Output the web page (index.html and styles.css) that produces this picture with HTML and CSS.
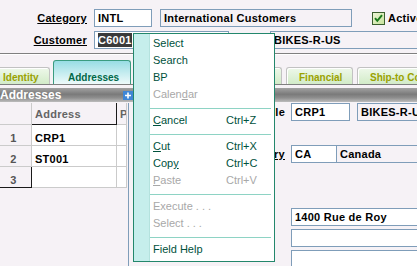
FILE: index.html
```html
<!DOCTYPE html>
<html>
<head>
<meta charset="utf-8">
<title>Customer Maintenance</title>
<link rel="stylesheet" href="styles.css">
</head>
<body>
<div class="page">
  <div class="hdr">
    <div class="frow">
      <span class="lbl">Category</span>
      <div class="inp w-cat">INTL</div>
      <div class="inp ro w-catd">International Customers</div>
      <div class="chk">
        <svg width="13" height="13" viewBox="0 0 13 13" class="chkbox">
          <defs>
            <linearGradient id="cg" x1="0" y1="0" x2="1" y2="1">
              <stop offset="0" stop-color="#eef6d8"/>
              <stop offset="1" stop-color="#c6e29a"/>
            </linearGradient>
          </defs>
          <rect x="0.5" y="0.5" width="12" height="12" fill="url(#cg)" stroke="#3b5f2e"/>
          <path d="M3 6.2 L5.3 8.8 L10 3.2" fill="none" stroke="#1b7a1b" stroke-width="2"/>
        </svg>
        <span>Active</span>
      </div>
    </div>
    <div class="frow r2">
      <span class="lbl">Customer</span>
      <div class="inp w-cus"><span class="sel">C6001</span></div>
      <div class="inp ro w-cusd">BIKES-R-US</div>
    </div>
  </div>
  <div class="rule"></div>
  <div class="tabs">
    <div class="tab w-ident">Identity</div>
    <div class="tab active w-addr">Addresses</div>
    <div class="tab w-cont">Contacts</div>
    <div class="tab w-mkt">Marketing</div>
    <div class="tab w-fin">Financial</div>
    <div class="tab w-ship">Ship-to Codes</div>
  </div>
  <div class="bar">
    <div class="bar-left"><span>Addresses</span><span class="plus"><svg width="10" height="9" viewBox="0 0 10 9"><rect width="10" height="9" fill="#3f86d6"/><path d="M5 1.5V7.5M2 4.5H8" stroke="#fff" stroke-width="1.6"/></svg></span></div>
  </div>
  <div class="main">
    <div class="leftp">
      <div class="grid">
        <div class="gc gh"></div>
        <div class="gc gh gfocus">Address</div>
        <div class="gc gh">P</div>
        <div class="gc gn">1</div>
        <div class="gc">CRP1</div>
        <div class="gc"></div>
        <div class="gc gn">2</div>
        <div class="gc">ST001</div>
        <div class="gc"></div>
        <div class="gc gn gcur">3</div>
        <div class="gc"></div>
        <div class="gc"></div>
      </div>
    </div>
    <div class="rightp">
      <div class="rrow">
        <span class="rlbl">Address Handle</span>
        <div class="inp w-code">CRP1</div>
        <div class="inp ro w-name">BIKES-R-US</div>
      </div>
      <div class="rrow r-country">
        <span class="rlbl ul">Country</span>
        <div class="inp w-cc">CA</div>
        <div class="inp ro w-cn">Canada</div>
      </div>
      <div class="rrow r-addr">
        <span class="rlbl"></span>
        <div class="inp w-line">1400 Rue de Roy</div>
      </div>
      <div class="rrow r-next">
        <span class="rlbl"></span>
        <div class="inp w-line"></div>
      </div>
      <div class="rrow r-next">
        <span class="rlbl"></span>
        <div class="inp w-line"></div>
      </div>
    </div>
  </div>
</div>

<div class="menu">
  <div class="mi"><span>Select</span><span></span></div>
  <div class="mi"><span>Search</span><span></span></div>
  <div class="mi"><span>BP</span><span></span></div>
  <div class="mi dis"><span>Calen<u>d</u>ar</span><span></span></div>
  <div class="sep"></div>
  <div class="mi"><span><u>C</u>ancel</span><span>Ctrl+Z</span></div>
  <div class="sep"></div>
  <div class="mi"><span><u>C</u>ut</span><span>Ctrl+X</span></div>
  <div class="mi"><span>Cop<u>y</u></span><span>Ctrl+C</span></div>
  <div class="mi dis"><span><u>P</u>aste</span><span>Ctrl+V</span></div>
  <div class="sep"></div>
  <div class="mi dis"><span>Execute . . .</span><span></span></div>
  <div class="mi dis"><span>Select . . .</span><span></span></div>
  <div class="sep"></div>
  <div class="mi"><span>Field Help</span><span></span></div>
</div>
</body>
</html>
```

FILE: styles.css
```css
* { box-sizing: border-box; }
html, body { margin: 0; padding: 0; }
body {
  width: 417px;
  height: 266px;
  overflow: hidden;
  position: relative;
  background: #f6f2f6;
  color: #000;
  font-family: "Liberation Sans", Arial, sans-serif;
  font-size: 11px;
}
.page { width: 417px; height: 266px; overflow: hidden; }

/* header fields */
.hdr { padding-top: 9px; }
.frow { display: flex; align-items: center; height: 18px; white-space: nowrap; }
.r2 { margin-top: 4px; }
.lbl {
  flex: none;
  width: 87px;
  margin-right: 7px;
  text-align: right;
  font-weight: bold;
  letter-spacing: .25px;
  text-decoration: underline;
}
.inp {
  flex: none;
  height: 18px;
  border: 1px solid #7f9db9;
  background: #fff;
  padding: 0 3px;
  font-weight: bold;
  letter-spacing: .25px;
  display: flex;
  align-items: center;
  overflow: hidden;
  white-space: nowrap;
}
.ro { background: #f6f2f6; }
.w-cat { width: 58px; margin-right: 8px; }
.w-catd { width: 192px; margin-right: 20px; }
.w-cus { width: 135px; margin-right: 41px; }
.w-cusd { width: 170px; }
.sel { background: #3a3a3a; color: #fff; line-height: 14px; }
.chk { display: flex; align-items: center; font-weight: bold; letter-spacing: .25px; }
.chkbox { margin-right: 3px; flex: none; }

.rule { margin-top: 4px; height: 2px; border-top: 1px solid #808080; border-bottom: 1px solid #fff; }

/* tabs */
.tabs {
  display: flex;
  align-items: flex-end;
  gap: 4px;
  height: 30px;
  margin-left: -10px;
  border-bottom: 1px solid #808080;
}
.tab {
  flex: none;
  height: 17px;
  padding: 4px 0 0 12px;
  line-height: 12px;
  border: 1px solid #c2c2c2;
  border-bottom: none;
  border-radius: 3px 3px 0 0;
  background: linear-gradient(#eef8ea, #d2ebc8);
  box-shadow: inset 1px 1px 0 #fff;
  color: #9aa200;
  font-weight: bold;
  font-size: 10px;
  white-space: nowrap;
  overflow: hidden;
}
.tab.active {
  height: 24px;
  margin: 0 -1px;
  padding: 11px 0 0 14px;
  border-color: #3a9c80;
  background: linear-gradient(#98dde4, #eefafa);
  box-shadow: none;
  color: #006848;
}
.w-ident { width: 60px; }
.w-addr { width: 78px; }
.w-cont { width: 72px; }
.w-mkt { width: 72px; }
.w-fin { width: 67px; }
.w-ship { width: 90px; }

/* section bar */
.bar {
  margin-top: 3px;
  height: 14px;
  background: linear-gradient(#a2a2a2, #7a7a7a 45%, #8e8e8e 70%, #bcbcbc);
}
.bar-left {
  width: 133px;
  height: 14px;
  padding-top: 1px;
  display: flex;
  justify-content: space-between;
  align-items: center;
  color: #fff;
  font-weight: bold;
  font-size: 12px;
  line-height: 13px;
}
.plus { display: flex; margin-bottom: 1px; }

/* main area */
.main { display: flex; margin-top: 1px; height: 163px; }
.leftp { flex: none; width: 129px; border-right: 1px solid #7f9db9; }
.grid {
  display: grid;
  grid-template-columns: 32px 85px 10px;
  grid-template-rows: 22px 21px 21px 21px;
}
.gc {
  border-right: 1px solid #cbcbcb;
  border-bottom: 1px solid #cbcbcb;
  background: #fff;
  font-weight: bold;
  letter-spacing: .25px;
  padding-left: 3px;
  line-height: 26px;
  white-space: nowrap;
  overflow: hidden;
}
.gh { background: #f6f2f6; color: #646464; line-height: 22px; }
.gn { background: #f6f2f6; color: #555; text-align: center; padding: 0 4px 0 0; }
.gfocus { border-right-color: #1a1a1a; border-bottom-color: #1a1a1a; }
.gcur { border-right-color: #1a1a1a; border-bottom-color: #1a1a1a; }

.rightp { flex: 1; padding-left: 5px; display: flex; flex-direction: column; }
.rrow { display: flex; align-items: center; height: 18px; white-space: nowrap; }
.rlbl {
  flex: none;
  width: 151px;
  margin-right: 6px;
  text-align: right;
  font-weight: bold;
  letter-spacing: .25px;
}
.ul { text-decoration: underline; }
.r-country { margin-top: 24px; }
.r-addr { margin-top: 45px; }
.r-next { margin-top: 3px; }
.w-code { width: 59px; margin-right: 7px; }
.w-name { width: 80px; }
.w-cc { width: 46px; margin-right: -1px; }
.w-cn { width: 100px; }
.w-line { width: 140px; }

/* context menu */
.menu {
  position: absolute;
  left: 133px;
  top: 33px;
  width: 142px;
  height: 229px;
  border: 1px solid #23876c;
  padding: 1px 0 3px 0;
  background: #fff linear-gradient(to right, #c6eeec 0, #c6eeec 15px, #b4e2de 15px, #b4e2de 16px, #fff 16px);
}
.mi {
  display: grid;
  grid-template-columns: 73px 1fr;
  height: 17px;
  line-height: 17px;
  padding-left: 19px;
  color: #00513c;
  white-space: nowrap;
}
.mi.dis { color: #a8a8a8; }
.sep { height: 9px; padding-top: 5px; margin: 0 3px 0 16px; }
.sep::before { content: ""; display: block; height: 1px; background: #8ed3c4; }
```
